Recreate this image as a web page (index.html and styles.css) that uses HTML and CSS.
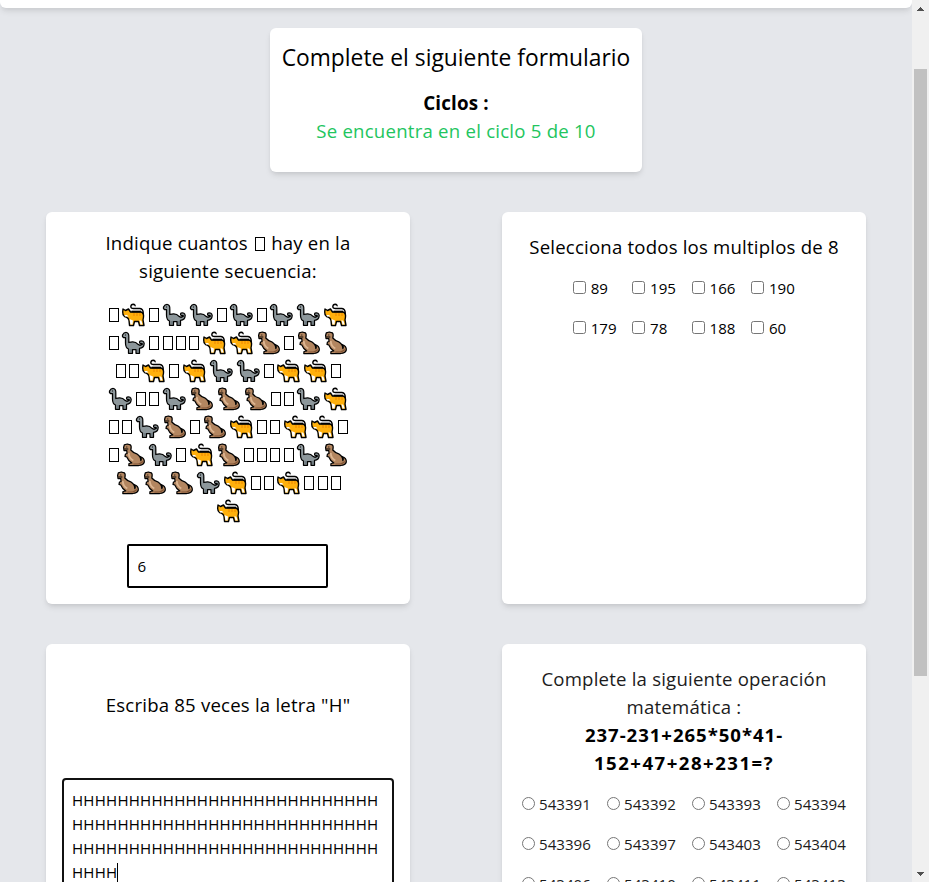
FILE: index.html
```html
<!DOCTYPE html>
<html lang="es">
<head>
<meta charset="utf-8">
<title>Formulario</title>
<link rel="stylesheet" href="styles.css">
</head>
<body>
<svg width="0" height="0" class="defs">
  <symbol id="cat" viewBox="0 0 27 24">
    <path d="M22.300 11Q22.300 5.800 19 5.500H13Q10 5.800 9.800 3.800Q10 1.200 12.200 1.200Q14.500 1.500 14 3.200" fill="none" stroke="#000" stroke-width="1.400"/>
    <path d="M1.700 9L2 6 4.500 7.500 7.500 6 9.500 9H20Q23 10 22.500 14L22 17 23 22.500H18.500L17.500 18.500H13.500L12.500 22.500H8.500L8 17.500Q7.500 14.500 3.500 13.500Q1.500 12 1.700 9Z" fill="#ffb00c" stroke="#000" stroke-width="1.400" stroke-linejoin="round"/>
    <path d="M3.500 12H6L7.500 13.500H4ZM8.500 16L12 17.500 11.500 21.500H9.500ZM18.500 17L20.500 18 21.500 21.500H19.500Z" fill="#fff"/>
    <path d="M10.500 8.500H20" stroke="#000" stroke-width="1.700"/>
    <path d="M13 10V13M16 10V13M19 10V13" stroke="#ee8500"/>
  </symbol>
  <symbol id="sauropod" viewBox="0 0 27 24">
    <path d="M1.500 5.500V4Q3 1.200 5.500 1.500Q8 2 7.800 6V11.500Q14 9.500 17 13.300Q19 15.200 21.300 13.300Q21.500 12 20 12.800Q17.700 12 19 10.200Q22.700 9.200 23.200 12.500Q23 17 18.500 17.300V22.300H15V18.500H11.500V22.300H7.500V18Q4.500 17 4.500 12V6.700H2.500Z" fill="#8d979b" stroke="#000" stroke-width="1.250" stroke-linejoin="round"/>
    <path d="M10 18V21M17 18V21" fill="none" stroke="#606d74" stroke-width="1.200"/>
    <path d="M4 4h1" stroke="#111"/>
  </symbol>
  <symbol id="rex" viewBox="0 0 27 24">
    <g transform="translate(1.300 0)">
      <path d="M1.300 4.500L2 1.800 5 1 8 1.800Q9.500 3 8.500 7Q11 10 15 11.200Q18.500 13.500 18.500 17.500Q19.800 16 17.800 13.500Q22.300 15 22 19Q21 22.300 16.500 22.500H6.500L6.700 20.500 9.500 20 6.500 17.500 4.500 14 2.700 13.300 3.200 11 4.700 10.500 4.500 7.500H1.700Z" fill="#b38660" stroke="#000" stroke-width="1.250" stroke-linejoin="round"/>
      <path d="M6.500 10Q6.500 15 11 17.500" fill="none" stroke="#dcb591" stroke-width="1.800"/>
      <path d="M11 21H16Q18.500 20.500 20.500 18.500" fill="none" stroke="#805334" stroke-width="1.200"/>
      <path d="M4 4h1M2 6H6" stroke="#000"/>
    </g>
  </symbol>
</svg>
<div class="window">
  <main class="page">
    <div class="topbar"></div>
    <header class="card intro">
      <h1>Complete el siguiente formulario</h1>
      <h2>Ciclos :</h2>
      <p>Se encuentra en el ciclo 5 de 10</p>
    </header>
    <div class="grid">
      <section class="card count">
        <p class="question">Indique cuantos <i class="box"></i> hay en la<br>siguiente secuencia:</p>
        <div class="sequence" id="sequence"></div>
        <input class="answer" type="text" value="6">
      </section>
      <section class="card multiples">
        <p class="question">Selecciona todos los multiplos de 8</p>
        <div class="options checks">
          <label><input type="checkbox">89</label><label><input type="checkbox">195</label><label><input type="checkbox">166</label><label><input type="checkbox">190</label>
          <label><input type="checkbox">179</label><label><input type="checkbox">78</label><label><input type="checkbox">188</label><label><input type="checkbox">60</label>
        </div>
      </section>
      <section class="card letters">
        <p class="question">Escriba 85 veces la letra "H"</p>
        <div class="textarea">HHHHHHHHHHHHHHHHHHHHHHHHHHH<br>HHHHHHHHHHHHHHHHHHHHHHHHHHH<br>HHHHHHHHHHHHHHHHHHHHHHHHHHH<br>HHHH<i class="caret"></i></div>
      </section>
      <section class="card operation">
        <p class="question">Complete la siguiente operación<br>matemática :<br><b class="first">237-231+265*50*41-</b><br><b class="second">152+47+28+231=?</b></p>
        <div class="options radios">
          <label><input type="radio" name="r">543391</label><label><input type="radio" name="r">543392</label><label><input type="radio" name="r">543393</label><label><input type="radio" name="r">543394</label>
          <label><input type="radio" name="r">543396</label><label><input type="radio" name="r">543397</label><label><input type="radio" name="r">543403</label><label><input type="radio" name="r">543404</label>
          <label><input type="radio" name="r">543406</label><label><input type="radio" name="r">543410</label><label><input type="radio" name="r">543411</label><label><input type="radio" name="r">543413</label>
        </div>
      </section>
    </div>
  </main>
  <div class="scrollbar">
    <svg width="17" height="17" shape-rendering="crispEdges"><path d="M8 7h1v1h1v1h1v1h1v1H5v-1h1V9h1V8h1z" fill="#505050"/></svg>
    <div class="thumb"></div>
    <svg class="down" width="17" height="17" shape-rendering="crispEdges"><path d="M5 7h7v1h-1v1h-1v1H9v1H8v-1H7V9H6V8H5z" fill="#505050"/></svg>
  </div>
</div>
<script src="script.js"></script>
</body>
</html>
```
FILE: styles.css
```css
* { box-sizing: border-box; }
body { margin: 0; height: 882px; overflow: hidden; background: #e5e7eb; color: #000; font: 400 15.1px/24px "Open Sans", "Noto Sans", sans-serif; }
h1, h2, p { margin: 0; font-weight: 400; white-space: nowrap; }
.defs { display: block; height: 0; }
.window { display: flex; height: 882px; }
.page { width: 912px; height: 882px; overflow: hidden; }
.topbar { height: 8px; background: #fff; border-radius: 0 0 6px 6px; box-shadow: 0 4px 6px -1px #0000001a, 0 2px 4px -1px #0000000f; }
.card { background: #fff; border-radius: 6px; box-shadow: 0 4px 6px -1px #0000001a, 0 2px 4px -1px #0000000f; }
.intro { width: 372px; height: 144px; margin: 20px auto 40px; padding-top: 14px; text-align: center; }
.intro h1 { font-size: 22.8px; line-height: 32px; letter-spacing: .01px; }
.intro h2 { margin-top: 15px; font-size: 18.8px; line-height: 28px; font-weight: 700; letter-spacing: .15px; }
.intro p { color: #22c55e; font-size: 18.6px; line-height: 28px; letter-spacing: .23px; }
.grid { display: grid; grid-template-columns: 364px 364px; grid-template-rows: 392px 392px; gap: 40px 92px; padding-left: 46px; }
.grid .card { display: flex; flex-direction: column; align-items: center; }
.question { text-align: center; font-size: 18.6px; line-height: 28px; letter-spacing: .2px; }
.count { padding-top: 17px; }
.box { display: inline-block; width: 10px; height: 14px; margin: 0 1.6px; border: 1px solid #000; vertical-align: -1px; }
.sequence { margin: 16px 0 0 2px; }
.row { display: flex; justify-content: center; align-items: center; height: 28px; }
.row .box { flex: none; margin: 0 2.4px 0 1px; }
.row svg { display: block; flex: none; width: 27px; height: 24px; }
.answer { width: 201px; height: 44px; margin: 19px 2px 0 0; padding: 0 9px; border: 2px solid #000; border-radius: 2px; background: #fff; outline: 0; font: inherit; color: #000; }
.multiples { padding-top: 21px; }
.options { display: grid; grid-auto-rows: 40px; }
.options label { display: flex; align-items: center; white-space: nowrap; }
.options input { flex: none; width: 13px; height: 13px; margin: 0 5px 2px 0; }
.checks { grid-template-columns: repeat(4, 59.4px); margin: 7px 0 0 15px; }
.letters { padding-top: 47px; }
.textarea { width: 332px; height: 150px; margin-top: 59px; padding: 8px; border: 2px solid #111; border-radius: 4px; letter-spacing: .22px; }
.caret { display: inline-block; width: 1px; height: 20px; background: #000; vertical-align: -5px; }
.operation { padding-top: 21px; color: #1c1c1c; }
.operation b { color: #000; }
.operation .first { letter-spacing: .95px; }
.operation .second { letter-spacing: 1.5px; }
.radios { grid-template-columns: repeat(4, 85px); margin: 7px 0 0 16px; }
.radios input { margin-right: 4px; }
.scrollbar { display: flex; flex-direction: column; width: 17px; background: #f0f0f0; }
.scrollbar svg { display: block; }
.thumb { width: 13px; height: 607px; margin: 52px 2px 0; background: #c1c1c1; }
.down { margin-top: auto; }
```
FILE: script.js
```js
const rows = ["TCTDDTDTDDC", "TDTTTTCCRTRR", "TTCTCDDTCCT", "DTTDRRRTTDC", "TTDRTRCTTCCT", "TRDTCRTTTTDR", "RRRDCTTCTTT", "C"];
const symbols = { C: "cat", D: "sauropod", R: "rex" };
document.getElementById("sequence").innerHTML = rows.map(row =>
  '<div class="row">' + [...row].map(c => c === "T" ? '<i class="box"></i>' : `<svg><use href="#${symbols[c]}"/></svg>`).join("") + "</div>"
).join("");
```
